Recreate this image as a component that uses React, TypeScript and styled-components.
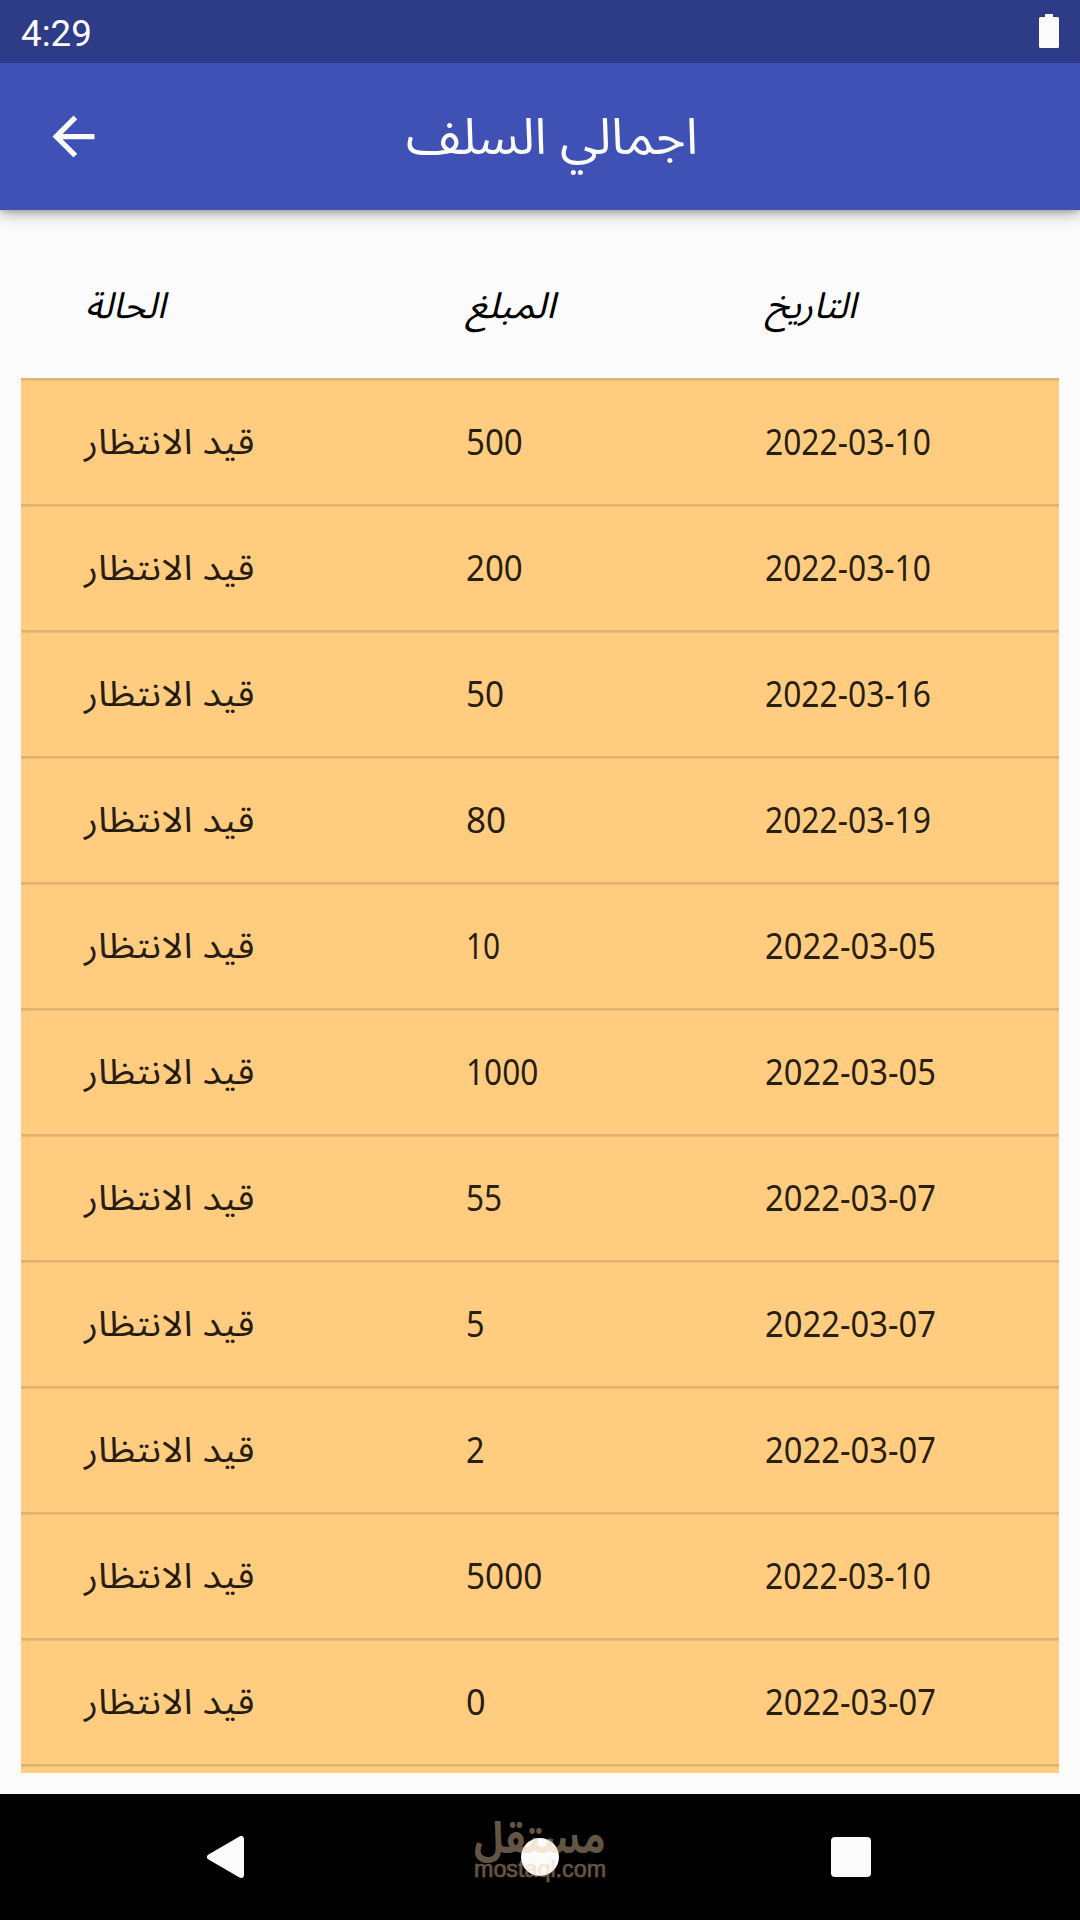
import React, { useLayoutEffect, useRef, useState } from 'react';
import styled, { createGlobalStyle } from 'styled-components';

const GlobalStyle = createGlobalStyle`
  * { box-sizing: border-box; }
  html, body { margin: 0; padding: 0; background: #fbfbfb; }
`;

const LATIN = "'Noto Sans', 'Open Sans', sans-serif";
const ARABIC = "'Noto Sans Arabic', 'DejaVu Sans', sans-serif";

const Screen = styled.div`
  width: 1080px;
  height: 1920px;
  display: flex;
  flex-direction: column;
  overflow: hidden;
  background: #fbfbfb;
`;

const StatusBar = styled.header`
  height: 63px;
  flex: none;
  display: flex;
  align-items: center;
  justify-content: space-between;
  padding: 0 21px;
  background: #2e3c87;
  z-index: 2;
`;

const Clock = styled.time`
  font: 400 36.75px/43px Roboto, sans-serif;
  color: #fbfbfb;
  padding-top: 3px;
`;

const Battery = styled.svg`
  display: block;
  margin-top: -1px;
`;

const AppBar = styled.div`
  height: 147px;
  flex: none;
  display: grid;
  grid-template-columns: 147px 1fr 127px;
  align-items: center;
  background: #3f51b5;
  box-shadow: 0 4px 14px rgba(0, 0, 0, 0.3), 0 2px 5px rgba(0, 0, 0, 0.16);
  z-index: 1;
`;

const BackButton = styled.button`
  display: flex;
  justify-content: center;
  border: 0;
  padding: 0;
  background: none;
`;

const Title = styled.h1`
  margin: 0;
  padding: 3px 0 0 3px;
  display: flex;
  justify-content: center;
  font: 400 50px/70px ${ARABIC};
  color: #fbfbfb;
`;

const Content = styled.main`
  flex: 1;
  min-height: 0;
  padding: 0 21px 21px;
`;

const Table = styled.div`
  height: 100%;
  overflow: hidden;
`;

const Row = styled.div`
  display: grid;
  grid-template-columns: 382px 299px 1fr;
  align-items: center;
  padding-left: 63px;
`;

const HeadRow = styled(Row)`
  height: 168px;
  padding-top: 25px;
  padding-left: 64px;
  color: #000;
  font: italic 400 36px/48px ${ARABIC};
`;

const DataRow = styled(Row)`
  height: 126px;
  padding-top: 1px;
  background: #ffcc80;
  box-shadow: inset 0 2px 0 #e0b371, inset 0 3px 0 #e9bb76;
  color: rgba(0, 0, 0, 0.87);
  font: 400 36px/48px ${LATIN};
`;

const ArabicCell = styled.div`
  padding-top: 2px;
  font: 400 35px/48px ${ARABIC};
`;

const Cell = styled.div``;

const FitBox = styled.span<{ $width: number }>`
  display: block;
  width: ${(p) => p.$width}px;
  white-space: nowrap;
`;

const FitInner = styled.span`
  display: inline-block;
  transform-origin: left center;
`;

const NavBar = styled.nav`
  height: 126px;
  flex: none;
  position: relative;
  display: flex;
  align-items: center;
  justify-content: space-between;
  padding: 0 209px 0 207px;
  background: #000;
`;

const HomeDot = styled.i`
  width: 38px;
  height: 38px;
  border-radius: 50%;
  background: #fbfbfb;
  margin-left: 5px;
`;

const RecentSquare = styled.i`
  width: 40px;
  height: 40px;
  border-radius: 4px;
  background: #fbfbfb;
`;

const Watermark = styled.div`
  position: absolute;
  left: 474px;
  top: 27px;
  width: 132px;
  color: rgb(233, 202, 162);
  opacity: 0.42;
`;

const WatermarkName = styled.div`
  height: 36px;
  font: 700 44px/36px ${ARABIC};
`;

const WatermarkSite = styled.div`
  font: 400 24px/24px 'Liberation Sans', Arial, sans-serif;
  -webkit-text-stroke: 0.7px currentColor;
`;

/** Stretches a line of text horizontally so that it fills the given width. */
function Fit({ width, rtl, children }: { width: number; rtl?: boolean; children: string }) {
  const ref = useRef<HTMLSpanElement>(null);
  const [scale, setScale] = useState(1);
  useLayoutEffect(() => {
    if (ref.current) setScale(width / ref.current.offsetWidth);
  }, [width, children]);
  return (
    <FitBox $width={width}>
      <FitInner ref={ref} dir={rtl ? 'rtl' : 'ltr'} style={{ transform: `scaleX(${scale})` }}>
        {children}
      </FitInner>
    </FitBox>
  );
}

type Advance = { amount: string; amountWidth: number; date: string; dateWidth: number };

const ADVANCES: Advance[] = [
  { amount: '500', amountWidth: 57, date: '2022-03-10', dateWidth: 166 },
  { amount: '200', amountWidth: 57, date: '2022-03-10', dateWidth: 166 },
  { amount: '50', amountWidth: 38, date: '2022-03-16', dateWidth: 166 },
  { amount: '80', amountWidth: 40, date: '2022-03-19', dateWidth: 166 },
  { amount: '10', amountWidth: 34, date: '2022-03-05', dateWidth: 171 },
  { amount: '1000', amountWidth: 72, date: '2022-03-05', dateWidth: 171 },
  { amount: '55', amountWidth: 36, date: '2022-03-07', dateWidth: 171 },
  { amount: '5', amountWidth: 19, date: '2022-03-07', dateWidth: 171 },
  { amount: '2', amountWidth: 19, date: '2022-03-07', dateWidth: 171 },
  { amount: '5000', amountWidth: 76, date: '2022-03-10', dateWidth: 166 },
  { amount: '0', amountWidth: 20, date: '2022-03-07', dateWidth: 171 },
];

export default function App() {
  return (
    <Screen>
      <GlobalStyle />
      <StatusBar>
        <Clock>4:29</Clock>
        <Battery width="20" height="34" viewBox="0 0 20 34">
          <path d="M6 0h8v3h4.500a1.500 1.500 0 0 1 1.500 1.500v28a1.500 1.500 0 0 1-1.500 1.500h-17a1.500 1.500 0 0 1-1.500-1.500v-28a1.500 1.500 0 0 1 1.500-1.500H6z" fill="#fbfbfb" />
        </Battery>
      </StatusBar>
      <AppBar>
        <BackButton aria-label="Back">
          <svg width="63" height="63" viewBox="0 0 24 24" fill="#fbfbfb">
            <path d="M20 11H7.830l5.590-5.590L12 4l-8 8 8 8 1.410-1.410L7.830 13H20v-2z" />
          </svg>
        </BackButton>
        <Title>
          <Fit width={292} rtl>اجمالي السلف</Fit>
        </Title>
      </AppBar>
      <Content>
        <Table>
          <HeadRow>
            <Cell><Fit width={80} rtl>الحالة</Fit></Cell>
            <Cell><Fit width={88} rtl>المبلغ</Fit></Cell>
            <Cell><Fit width={90} rtl>التاريخ</Fit></Cell>
          </HeadRow>
          {ADVANCES.map((a, i) => (
            <DataRow key={i}>
              <ArabicCell><Fit width={170} rtl>قيد الانتظار</Fit></ArabicCell>
              <Cell><Fit width={a.amountWidth}>{a.amount}</Fit></Cell>
              <Cell><Fit width={a.dateWidth}>{a.date}</Fit></Cell>
            </DataRow>
          ))}
          <DataRow />
        </Table>
      </Content>
      <NavBar>
        <svg width="37" height="42" viewBox="0 0 37 42">
          <path d="M3 21L34 3v36z" fill="#fbfbfb" stroke="#fbfbfb" strokeWidth="6" strokeLinejoin="round" />
        </svg>
        <HomeDot />
        <RecentSquare />
        <Watermark>
          <WatermarkName><Fit width={132} rtl>مستقل</Fit></WatermarkName>
          <WatermarkSite><Fit width={132}>mostaql.com</Fit></WatermarkSite>
        </Watermark>
      </NavBar>
    </Screen>
  );
}
